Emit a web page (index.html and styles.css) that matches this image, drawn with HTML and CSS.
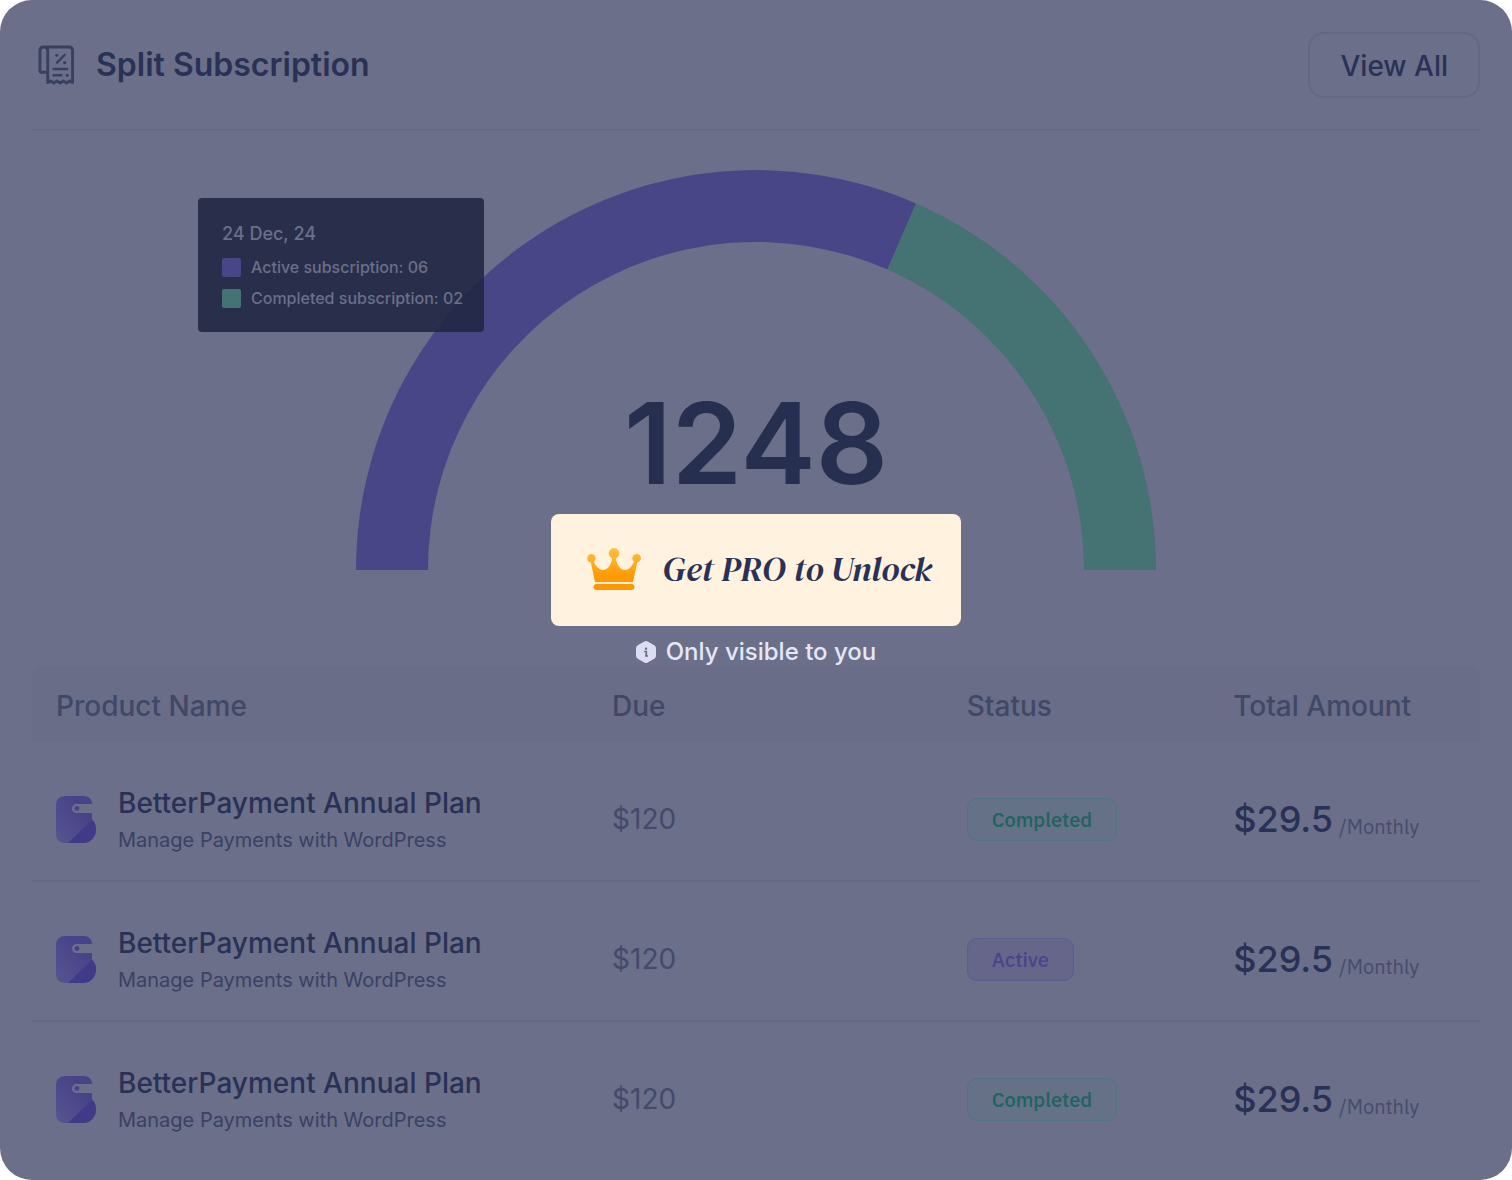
FILE: index.html
```html
<!DOCTYPE html>
<html lang="en">
<head>
<meta charset="utf-8">
<meta name="viewport" content="width=device-width, initial-scale=1">
<title>Split Subscription</title>
<link rel="stylesheet" href="styles.css">
</head>
<body>
<svg class="defs" width="0" height="0" aria-hidden="true">
  <defs>
    <linearGradient id="logo-light" x1="0" y1="1" x2="1" y2="0">
      <stop offset="0" stop-color="#575590"/>
      <stop offset="0.6" stop-color="#4a4589"/>
      <stop offset="1" stop-color="#45408a"/>
    </linearGradient>
    <linearGradient id="crown-fill" x1="0" y1="0" x2="0" y2="1">
      <stop offset="0" stop-color="#ffc046"/>
      <stop offset="0.8" stop-color="#ff9b04"/>
      <stop offset="1" stop-color="#ff9800"/>
    </linearGradient>
    <symbol id="logo" viewBox="0 0 40 47">
      <path fill="url(#logo-light)" d="M9 0H27C33 0 36 3.500 36 8H20.500a4.500 4.500 0 0 0 0 9H36V23.500C39 26 40 30 40 33.500C40 41 34.500 47 27 47H9C3.500 47 0 43.500 0 38V9C0 3.500 3.500 0 9 0Z"/>
      <path fill="#413a87" d="M36 24C39 26.500 40 30 40 33.500C40 41 34.500 47 27 47H12Z"/>
      <circle cx="21" cy="12.500" r="2.400" fill="#45418a"/>
    </symbol>
  </defs>
</svg>

<main class="card">
  <header class="card-header">
    <svg class="title-icon" viewBox="0 0 38 42" fill="none" stroke="#39405f" stroke-width="3" stroke-linecap="round" stroke-linejoin="round" aria-hidden="true">
      <path d="M10 28H3.500A1.500 1.500 0 0 1 2 26.500V6Q2 2 6 2H31.500Q35.500 2 35.500 6V38.500L32.500 37L29.500 39L26 37L22.800 39L19.500 37L16.200 39L13 37L10 38.500V6Q10 2 6 2"/>
      <path d="M19.500 18L27.500 10" stroke-width="2.400"/>
      <path d="M16 24.700H30M16 31H24" stroke-width="2.600"/>
      <g fill="#39405f" stroke="none"><circle cx="19.300" cy="10.500" r="1.600"/><circle cx="27.500" cy="18" r="1.600"/><circle cx="30" cy="31" r="1.600"/></g>
    </svg>
    <h1 class="title">Split Subscription</h1>
    <button class="view-all" type="button">View All</button>
  </header>

  <section class="chart">
    <div class="gauge">
      <svg class="gauge-arc" viewBox="0 0 800 400" role="img" aria-label="Active and completed subscriptions">
        <path fill="#494687" d="M0 400A400 400 0 0 1 560 33.500L531.500 99.500A328 328 0 0 0 72 400Z"/>
        <path fill="#457273" d="M560 33.500A400 400 0 0 1 800 400H728A328 328 0 0 0 531.500 99.500Z"/>
      </svg>
      <strong class="gauge-total">1248</strong>
      <div class="tooltip">
        <p class="tooltip-date">24 Dec, 24</p>
        <p class="tooltip-item"><span class="swatch swatch-active"></span>Active subscription: 06</p>
        <p class="tooltip-item"><span class="swatch swatch-completed"></span>Completed subscription: 02</p>
      </div>
    </div>
  </section>

  <table class="plans">
    <colgroup><col class="col-product"><col class="col-due"><col class="col-status"><col class="col-total"></colgroup>
    <thead>
      <tr><th scope="col">Product Name</th><th scope="col">Due</th><th scope="col">Status</th><th scope="col">Total Amount</th></tr>
    </thead>
    <tbody>
      <tr>
        <td><div class="product"><svg class="logo" aria-hidden="true"><use href="#logo"/></svg><div><p class="product-name">BetterPayment Annual Plan</p><p class="product-note">Manage Payments with WordPress</p></div></div></td>
        <td class="due">$120</td>
        <td><span class="badge badge-completed">Completed</span></td>
        <td><div class="amount"><span class="price">$29.5</span><span class="period">/Monthly</span></div></td>
      </tr>
      <tr>
        <td><div class="product"><svg class="logo" aria-hidden="true"><use href="#logo"/></svg><div><p class="product-name">BetterPayment Annual Plan</p><p class="product-note">Manage Payments with WordPress</p></div></div></td>
        <td class="due">$120</td>
        <td><span class="badge badge-active">Active</span></td>
        <td><div class="amount"><span class="price">$29.5</span><span class="period">/Monthly</span></div></td>
      </tr>
      <tr>
        <td><div class="product"><svg class="logo" aria-hidden="true"><use href="#logo"/></svg><div><p class="product-name">BetterPayment Annual Plan</p><p class="product-note">Manage Payments with WordPress</p></div></div></td>
        <td class="due">$120</td>
        <td><span class="badge badge-completed">Completed</span></td>
        <td><div class="amount"><span class="price">$29.5</span><span class="period">/Monthly</span></div></td>
      </tr>
    </tbody>
  </table>

  <div class="upsell">
    <button class="unlock" type="button">
      <svg class="crown" viewBox="0 0 54 42" aria-hidden="true">
        <path fill="url(#crown-fill)" d="M4.300 6a4.300 4.300 0 0 1 2.500 7.800C9 18 12 22 16 22C21 22 24 16 25.300 10.400A5.300 5.300 0 1 1 28.700 10.400C30 16 33 22 38 22C42 22 45 18 47.200 13.800A4.300 4.300 0 1 1 50.200 14.500L46 34H8L3.800 14.500A4.300 4.300 0 0 1 4.300 6Z"/>
        <rect x="6.500" y="36" width="41" height="6" rx="3" fill="#ff9800"/>
      </svg>
      Get PRO to Unlock
    </button>
    <p class="visibility">
      <svg class="info" viewBox="0 0 20 22" aria-hidden="true">
        <path fill="#dcdcf2" d="M8.300 .6Q10 -.4 11.700 .6L18.300 4.200Q20 5.200 20 7V15Q20 16.800 18.300 17.800L11.700 21.400Q10 22.400 8.300 21.400L1.700 17.800Q0 16.800 0 15V7Q0 5.200 1.700 4.200Z"/>
        <path d="M8 10.500H10.300V15M9 15H12" fill="none" stroke="#6b6f8a" stroke-width="1.700"/>
        <circle cx="10" cy="7.800" r="1.200" fill="#6b6f8a"/>
      </svg>
      Only visible to you
    </p>
  </div>
</main>
</body>
</html>
```
FILE: styles.css
```css
* {
  box-sizing: border-box;
}

body {
  margin: 0;
  background: #fff;
  color: #2a3156;
  font-family: Inter, "Liberation Sans", sans-serif;
}

h1,
p {
  margin: 0;
}

button {
  cursor: pointer;
  color: inherit;
}

.defs {
  position: absolute;
}

.card {
  position: relative;
  min-height: 100vh;
  padding: 32px 32px 16px;
  border-radius: 32px;
  background: #6b6f8a;
}

.card-header {
  display: flex;
  align-items: center;
  padding-bottom: 31px;
  border-bottom: 2px solid #656986;
}

.title-icon {
  width: 37px;
  height: 41px;
  margin: 0 21px 0 6px;
}

.title {
  font-size: 32px;
  font-weight: 600;
  line-height: 40px;
}

.view-all {
  margin-left: auto;
  height: 66px;
  padding: 2px 30px 0;
  border: 2px solid #626786;
  border-radius: 16px;
  background: none;
  font-family: inherit;
  font-size: 28px;
  font-weight: 500;
}

.chart {
  padding: 39px 0 96px;
}

.gauge {
  position: relative;
  max-width: 800px;
  margin: 0 auto;
}

.gauge-arc {
  display: block;
  width: 100%;
}

.gauge-total {
  position: absolute;
  top: 215px;
  left: 0;
  right: 0;
  color: #262f4f;
  font-size: 113px;
  font-weight: 600;
  line-height: 116px;
  text-align: center;
}

.tooltip {
  position: absolute;
  top: 28px;
  left: -158px;
  display: grid;
  gap: 12px;
  padding: 24px 21px 24px 24px;
  border-radius: 4px;
  background: rgba(36, 40, 68, 0.92);
  color: #6b6f8a;
  font-weight: 500;
}

.tooltip-date {
  font-size: 18px;
  line-height: 24px;
}

.tooltip-item {
  display: flex;
  align-items: center;
  gap: 10px;
  font-size: 16px;
  line-height: 19px;
  white-space: nowrap;
}

.swatch {
  width: 19px;
  height: 19px;
  border-radius: 2px;
}

.swatch-active {
  background: #494687;
}

.swatch-completed {
  background: #457273;
}

.plans {
  width: 100%;
  border-collapse: separate;
  border-spacing: 0;
  table-layout: fixed;
}

.col-product {
  width: 38.4%;
}

.col-due {
  width: 24.5%;
}

.col-status {
  width: 18.4%;
}

.plans th {
  height: 76px;
  padding: 4px 24px 0;
  background: #696d87;
  color: #404868;
  font-size: 28px;
  font-weight: 500;
  text-align: left;
}

.plans th:first-child {
  border-top-left-radius: 8px;
}

.plans th:last-child {
  border-top-right-radius: 8px;
}

.plans td {
  height: 140px;
  padding: 44px 24px 28px;
  border-bottom: 2px solid #656984;
  white-space: nowrap;
}

.plans tbody tr:last-child td {
  border-bottom-color: transparent;
}

.product {
  display: flex;
  align-items: center;
  gap: 22px;
}

.logo {
  width: 40px;
  height: 47px;
}

.product-name {
  margin-bottom: 8px;
  font-size: 28px;
  font-weight: 500;
  line-height: 34px;
}

.product-note {
  color: #3a4164;
  font-size: 20px;
  line-height: 24px;
}

.due {
  color: #434a6a;
  font-size: 28px;
}

.badge {
  display: inline-block;
  padding: 0 24px;
  border: 1px solid;
  border-radius: 10px;
  font-family: "IBM Plex Sans", Inter, sans-serif;
  font-size: 20px;
  font-weight: 500;
  line-height: 41px;
}

.badge-completed {
  border-color: #507485;
  background: #657186;
  color: #1e6362;
}

.badge-active {
  border-color: #5e5b8e;
  background: #656689;
  color: #48458c;
}

.amount {
  display: flex;
  align-items: flex-end;
  gap: 6px;
}

.price {
  font-size: 36px;
  font-weight: 500;
  line-height: 44px;
}

.period {
  color: #454c6c;
  font-family: "IBM Plex Sans", Inter, sans-serif;
  font-size: 20px;
  line-height: 28px;
}

.upsell {
  position: absolute;
  inset: 0;
  display: flex;
  flex-direction: column;
  align-items: center;
  justify-content: center;
  gap: 12px;
}

.unlock {
  display: flex;
  align-items: center;
  gap: 22px;
  height: 112px;
  padding: 0 30px 2px 36px;
  border: 0;
  border-radius: 8px;
  background: #fff3df;
  font: italic 400 35px "DM Serif Display", "Liberation Serif", serif;
}

.crown {
  width: 54px;
  height: 42px;
}

.visibility {
  display: flex;
  align-items: center;
  gap: 10px;
  color: #e6e7f6;
  font-size: 24px;
  font-weight: 500;
  line-height: 28px;
}

.info {
  width: 20px;
  height: 22px;
}
```
